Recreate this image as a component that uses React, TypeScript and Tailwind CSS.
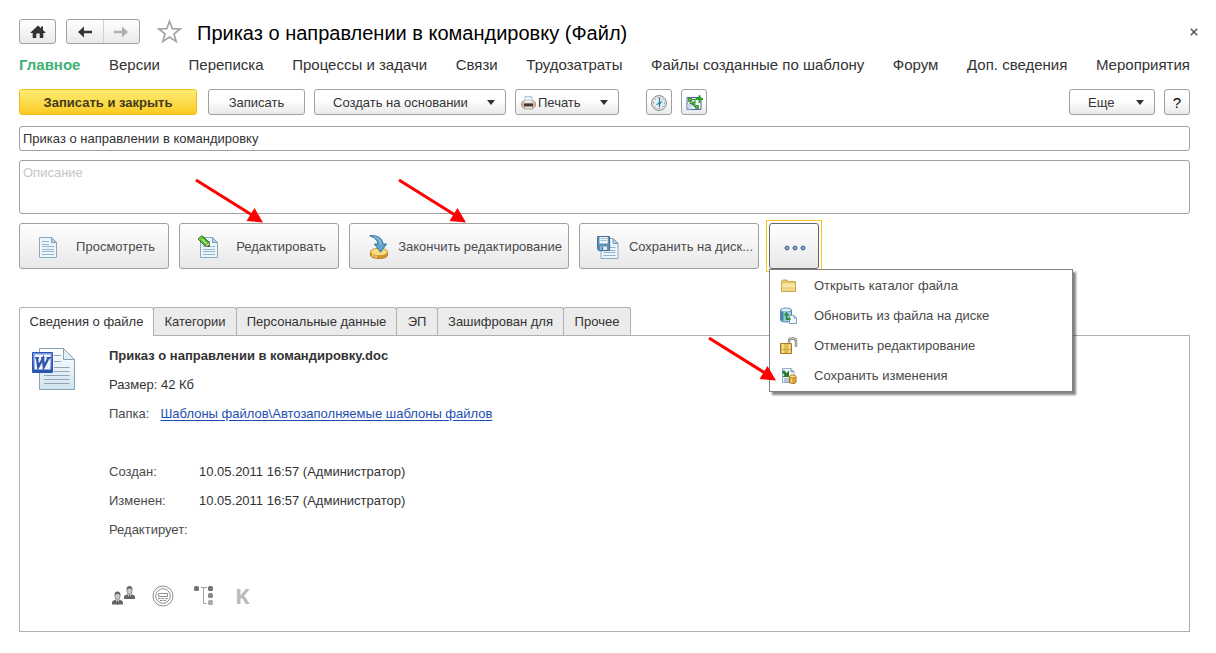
import type { ReactNode } from "react";

const toolButton =
  "flex h-[26px] shrink-0 items-center rounded-[3px] border border-[#a0a0a0] bg-linear-to-b from-white from-40% to-[#e9e9e9] pt-px text-[#333]";
const bigButton =
  "flex h-[46px] w-full items-center rounded-[3px] border border-[#a0a0a0] bg-linear-to-b from-white to-[#e8e8e8] pt-[2px] whitespace-nowrap text-[#4a4a4a]";

function Caret() {
  return (
    <svg width="8" height="5" viewBox="0 0 8 5" aria-hidden="true">
      <path d="M0 0h8L4 5z" fill="#333" />
    </svg>
  );
}

function HomeIcon() {
  return (
    <svg width="16" height="14" viewBox="0 0 16 14" fill="#333" aria-hidden="true">
      <path d="M8 .5.500 7.500V8h2.200v5h3.600V8.500h3.400V13h3.600V8h2.200v-.5L13 5V1.500h-2v1.700z" />
    </svg>
  );
}

function ArrowIcon({ color, flip }: { color: string; flip?: boolean }) {
  return (
    <svg width="14" height="12" viewBox="0 0 14 12" aria-hidden="true">
      <path
        d="M0 6 6 .5V4.800h8v2.400H6v4.300z"
        fill={color}
        transform={flip ? "matrix(-1 0 0 1 14 0)" : undefined}
      />
    </svg>
  );
}

function StarIcon() {
  return (
    <svg width="25" height="25" viewBox="0 0 25 25" aria-hidden="true">
      <path
        d="M12.500 2.200 15.300 9.700l7.900.3-6.200 4.900 2.200 7.700-6.700-4.500-6.700 4.500L8 14.900 1.800 10l7.900-.3z"
        fill="#fff"
        stroke="#a3a3a3"
        strokeWidth="1.700"
      />
    </svg>
  );
}

function PrinterIcon() {
  return (
    <svg width="15" height="14" viewBox="0 0 15 14" aria-hidden="true">
      <path d="M4 .5h7V6H4z" fill="#e8f0f6" stroke="#b3c3cf" />
      <path d="M2.500 4.500h10l2 2v4l-2 1h-10l-2-1v-4z" fill="#cdbfb4" stroke="#b0a197" />
      <path d="M3.500 4.500h8v2h-8z" fill="#f4f6f8" />
      <path d="M3 7.500h9v3H3z" fill="#3e3836" />
      <path d="M3.500 10.500h8l.5 2.500H3z" fill="#e9e2dc" stroke="#998a80" strokeWidth=".7" />
      <path d="M1 8h1.500v1.500H1zM12.500 8H14v1.500h-1.500z" fill="#e79c72" />
    </svg>
  );
}

function ClockIcon() {
  return (
    <svg width="16" height="16" viewBox="0 0 16 16" aria-hidden="true">
      <circle cx="8" cy="8" r="7.400" fill="#fff" stroke="#75828c" />
      <circle cx="8" cy="8" r="6" fill="#e6f1f8" stroke="#b4c2cc" strokeWidth=".7" />
      <path
        d="M8 2v1.200M8 12.800V14M2 8h1.200M12.800 8H14M3.800 3.800l.8.8M11.400 11.400l.8.8M3.800 12.200l.8-.8M12.200 3.800l-.8.8"
        stroke="#d9694a"
      />
      <path d="M8.500 3v9" stroke="#2d6d98" strokeWidth="1.200" />
      <path d="M5 9.500 8.500 8.500l2.500-2" fill="none" stroke="#3d9ac8" strokeWidth="1.300" />
      <circle cx="8.500" cy="8.300" r="1.300" fill="#2a86b5" />
    </svg>
  );
}

function SchemeIcon() {
  return (
    <svg width="17" height="16" viewBox="0 0 17 16" aria-hidden="true">
      <path d="M1 2.500h14v12H1z" fill="#f3f8fc" stroke="#4a669c" />
      <path d="M1.500 9h4v5.500h-4z" fill="#b9cbe0" />
      <path d="M1.500 10.500h4M1.500 12.500h4M3.500 9v5" stroke="#dde8f2" strokeWidth=".7" />
      <path d="M4 6v2.500h4v3h3M6 4.500h3v3" fill="none" stroke="#2f7f2a" />
      <path d="M2.500 3.500h3v3h-3zM6 7h3v3H6zM9.500 10.500h3v3h-3z" fill="#55b43e" stroke="#1f7420" strokeWidth=".7" />
      <path d="M9.500 3h3V.200h2V3H17v2h-2.500v3h-2V5h-3z" fill="#27a51a" />
    </svg>
  );
}

function PageShape() {
  return (
    <g>
      <path d="M.5.500h12l5 5v15H.5z" fill="#edf5fa" stroke="#8aa9be" />
      <path d="M12.500.500v5h5z" fill="#b9d3e4" stroke="#7c9fb8" />
      <path d="M3 4.500h7M3 7.500h7M3 9.500h12M3 12.500h12M3 14.500h12M3 17.500h12" stroke="#94b3c8" />
    </g>
  );
}

function PageIcon() {
  return (
    <svg width="20" height="22" viewBox="-1 -1 20 22" aria-hidden="true">
      <PageShape />
    </svg>
  );
}

function EditIcon() {
  return (
    <svg width="22" height="24" viewBox="0 0 22 24" aria-hidden="true">
      <g transform="translate(3 2)">
        <PageShape />
      </g>
      <path d="M1 4 5 .800 12 7l.5 4.500L8 10.800z" fill="#4fae2c" stroke="#237a19" />
      <path d="m4 3.500 6 5.500" stroke="#a5e57a" strokeWidth="1.800" />
      <path d="m12 7 .5 4.500L8 10.800z" fill="#e8d8a8" stroke="#4a6b2a" strokeWidth=".6" />
      <path d="m11.500 10 1 1.500-2-.3z" fill="#333" />
      <path d="M1 4 5 .800l1.300 1.100L2.300 5.200z" fill="#8ada60" stroke="#237a19" strokeWidth=".6" />
    </svg>
  );
}

function FinishIcon() {
  return (
    <svg width="20" height="24" viewBox="0 0 20 24" aria-hidden="true">
      <path d="M1.500 17v3c0 2 3.500 3.500 8.500 3.500s8.500-1.500 8.500-3.500v-3z" fill="#cf962f" stroke="#b67d1d" />
      <ellipse cx="10" cy="17" rx="8.500" ry="3.800" fill="#f8dc80" stroke="#c89430" />
      <path d="M4 19.500v2.500M7 20.500v2.500" stroke="#f5d77c" strokeWidth="1.500" />
      <path d="M.8.800C8.500 0 13.300 3 14 9h3.500l-6 8.200L5.500 9H9C8.500 5.500 6 2.500.8.800z" fill="#5fa5ce" stroke="#2f709a" />
      <path d="M5 1.800c4.500.8 6.500 3.500 6.700 8" fill="none" stroke="#a9d5ec" />
    </svg>
  );
}

function DiskIcon() {
  return (
    <svg width="22" height="23" viewBox="0 0 22 23" aria-hidden="true">
      <g transform="translate(3.500 2)">
        <PageShape />
      </g>
      <path d="M.6.600h12v14H2L.6 13.400z" fill="#5d90b6" stroke="#3d6c92" />
      <path d="M2.500 1h8.200v6.500H2.500z" fill="#f2f7fb" />
      <path d="M3.500 2.500h6M3.500 4.500h6" stroke="#9db9ce" />
      <path d="M3.500 10.500h6.500V14H3.500z" fill="#dbe7f0" />
      <path d="M4.500 11H6v3H4.500z" fill="#3d6c92" />
    </svg>
  );
}

function DotsIcon() {
  return (
    <svg width="22" height="6" viewBox="0 0 22 6" fill="#7f9fd0" stroke="#44638f" aria-hidden="true">
      <circle cx="3" cy="3" r="2" />
      <circle cx="11" cy="3" r="2" />
      <circle cx="19" cy="3" r="2" />
    </svg>
  );
}

function FolderIcon() {
  return (
    <svg width="18" height="18" viewBox="0 0 18 18" aria-hidden="true">
      <path d="M1.500 4.500 2.500 3h4.500l1.500 1.500h7v10h-14z" fill="#e8c76a" stroke="#cda54a" />
      <path d="M2 6.500h13v4H2z" fill="#f8e6a2" />
      <path d="M2 10.500h13V14H2z" fill="#f0d684" />
    </svg>
  );
}

function RefreshIcon() {
  return (
    <svg width="18" height="18" viewBox="0 0 18 18" aria-hidden="true">
      <path d="M.5 3v10c0 1.500 2.300 2 5.500 2s5.500-.5 5.500-2V3z" fill="#a5cbe0" stroke="#4f87a8" />
      <path d="M1 5h2.500v9L1 13z" fill="#4c87aa" />
      <ellipse cx="6" cy="3" rx="5.500" ry="2" fill="#e1f0f8" stroke="#5f97b8" />
      <path d="M9.500 8.500h4.500l2.500 2.500v5.500h-7z" fill="#f3f8fc" stroke="#7c9fb8" />
      <path d="M14 8.500V11h2.500" fill="none" stroke="#7c9fb8" />
      <path d="M3.500 8.500 6.500 5l3 3.500H7.500V11h3v2H5.700V8.500z" fill="#1f8f3a" />
    </svg>
  );
}

function LockIcon() {
  return (
    <svg width="18" height="18" viewBox="0 0 18 18" aria-hidden="true">
      <path d="M9 8V4.500C9 2.500 10.200 1.500 12.500 1.500S16 2.500 16 4.500V10" fill="none" stroke="#77746c" strokeWidth="2.400" />
      <path d="M9 8V4.500C9 2.500 10.200 1.500 12.500 1.500S16 2.500 16 4.500V10" fill="none" stroke="#e5e1d8" />
      <path d="M.5 6.500h11v10H.5z" fill="#e6bd52" stroke="#a87b22" />
      <path d="M3 7v9M9.500 7v9" stroke="#f8e5a0" strokeWidth="1.500" />
      <path d="M1 12.500h10" stroke="#d2a645" />
    </svg>
  );
}

function SaveChangesIcon() {
  return (
    <svg width="18" height="18" viewBox="0 0 18 18" aria-hidden="true">
      <path d="M2.500 1.500h8.500l3 3v11H2.500z" fill="#edf5fa" stroke="#93aec1" />
      <path d="M11 1.500v3h3" fill="#c6d9e6" stroke="#7795ab" />
      <path d="M2.500 3.500h2L6.500 6l2.500-2.500v6.500H2.500l2-2-2-2z" fill="#2c7a2c" />
      <path d="M4 12h5M4 14h5" stroke="#8299aa" />
      <path d="M9.500 9.500v5.500c0 2 6.500 2 6.500 0V9.500z" fill="#dfa93a" stroke="#a9761b" />
      <ellipse cx="12.750" cy="9.500" rx="3.250" ry="1.400" fill="#f9df88" stroke="#b98727" />
      <path d="M11.500 11.500v4.500" stroke="#f8dc82" />
    </svg>
  );
}

function WordIcon() {
  return (
    <svg width="44" height="44" viewBox="0 0 44 44" aria-hidden="true">
      <defs>
        <linearGradient id="sheet" x1="0" y1="0" x2="0" y2="1">
          <stop offset="0" stopColor="#fff" />
          <stop offset="1" stopColor="#cfe2ee" />
        </linearGradient>
        <linearGradient id="badge" x1="0" y1="0" x2="0" y2="1">
          <stop offset="0" stopColor="#789bec" />
          <stop offset="1" stopColor="#2450a8" />
        </linearGradient>
      </defs>
      <path d="M7.500 1.500h24l11 11v30h-35z" fill="url(#sheet)" stroke="#86a2b5" />
      <path d="M31.500 1.500v11h11z" fill="#e2eef5" stroke="#86a2b5" />
      <path
        d="M22 8.500h7M22 14.500h7M22 20.500h15.500M22 24.500h15.500M12 28.500h25.500M12 32.500h25.500M12 36.500h25.500"
        stroke="#91a6b4"
      />
      <path d="M.5 5.500h20v20H.5z" fill="url(#badge)" stroke="#2c55b5" />
      <path d="M2.500 7.500h16v15h-16z" fill="#f3f6fd" />
      <path d="m5 11 1.200 9L11 11.500l.8 8.500 5-9.500" fill="none" stroke="#3157ad" strokeWidth="2.400" />
      <path d="M3 10.800h4M9 10.800h3.500M14.500 10.800H19" stroke="#3157ad" strokeWidth="1.500" />
    </svg>
  );
}

function PeopleIcon() {
  const person = (
    <g>
      <path d="M0 13v-2c0-1.500 1.500-2.300 3.500-2.800h4C9.500 8.700 11 9.500 11 11v2z" fill="#666" />
      <path d="m3.800 8.200 1.700 4.300 1.700-4.300z" fill="#e6e6e6" />
      <path d="M5.500 9v4" stroke="#555" />
      <ellipse cx="5.500" cy="4.500" rx="2.600" ry="3.700" fill="#c9c9c9" stroke="#777" strokeWidth=".7" />
      <path d="M2.500 4C2.300 1.300 3.500 0 5.500 0s3.200 1.300 3 4c-1-2-4.500-2-6 0z" fill="#666" />
    </g>
  );
  return (
    <svg width="24" height="20" viewBox="0 0 24 20" aria-hidden="true">
      <g transform="translate(12 0)">{person}</g>
      <g transform="translate(0 5.500)">{person}</g>
    </svg>
  );
}

function StampIcon() {
  return (
    <svg width="22" height="22" viewBox="0 0 22 22" fill="none" stroke="#8c8c8c" aria-hidden="true">
      <circle cx="11" cy="11" r="10" />
      <circle cx="11" cy="11" r="7.300" />
      <path d="M6.500 8.500h9v3h-9zM6 13.500h2.500M9.500 13.500h2.500M13 13.500h2.500M8 15.500h2.500M11.500 15.500h2.500" />
    </svg>
  );
}

function TreeIcon() {
  return (
    <svg width="20" height="20" viewBox="0 0 20 20" aria-hidden="true">
      <path d="M7 1.500h6M9.500 1.500v16h3" fill="none" stroke="#a0a0a0" />
      <rect x="0" y="0" width="5" height="5" rx="1.500" fill="#777" />
      <rect x="14" y="0" width="5" height="5" rx="1.500" fill="#777" />
      <rect x="14" y="7" width="5" height="5" rx="1.500" fill="#8a8a8a" />
      <rect x="14" y="14" width="5" height="5" rx="1.500" fill="#aaa" />
    </svg>
  );
}

function Pointer({ className }: { className: string }) {
  return (
    <svg
      className={`pointer-events-none absolute z-20 ${className}`}
      width="70"
      height="46"
      viewBox="0 0 70 46"
      aria-hidden="true"
    >
      <path d="m2 2 56 35" stroke="#f00" strokeWidth="3" />
      <path d="M69 44.500 52.500 43 60.500 30z" fill="#f00" />
    </svg>
  );
}

const sections = [
  "Версии",
  "Переписка",
  "Процессы и задачи",
  "Связи",
  "Трудозатраты",
  "Файлы созданные по шаблону",
  "Форум",
  "Доп. сведения",
  "Мероприятия",
];

const menuItems: { label: string; icon: ReactNode }[] = [
  { label: "Открыть каталог файла", icon: <FolderIcon /> },
  { label: "Обновить из файла на диске", icon: <RefreshIcon /> },
  { label: "Отменить редактирование", icon: <LockIcon /> },
  { label: "Сохранить изменения", icon: <SaveChangesIcon /> },
];

const tabs = [
  { label: "Сведения о файле", width: "w-[135px]" },
  { label: "Категории", width: "w-[84px]" },
  { label: "Персональные данные", width: "w-[161px]" },
  { label: "ЭП", width: "w-[42px]" },
  { label: "Зашифрован для", width: "w-[127px]" },
  { label: "Прочее", width: "w-[68px]" },
];

function Header() {
  return (
    <header className="flex h-[25px] items-center">
      <button
        type="button"
        aria-label="Домой"
        className="flex h-[25px] w-[37px] items-center justify-center rounded-[3px] border border-[#a0a0a0] bg-linear-to-b from-white to-[#e9e9e9]"
      >
        <HomeIcon />
      </button>
      <div className="ml-[10px] flex h-[25px] w-[74px] rounded-[3px] border border-[#a0a0a0] bg-linear-to-b from-white to-[#e9e9e9]">
        <button
          type="button"
          aria-label="Назад"
          className="flex flex-1 items-center justify-center border-r border-[#d0d0d0]"
        >
          <ArrowIcon color="#333" />
        </button>
        <button type="button" aria-label="Вперед" className="flex flex-1 items-center justify-center">
          <ArrowIcon color="#b0b0b0" flip />
        </button>
      </div>
      <button type="button" aria-label="В избранное" className="ml-[17px]">
        <StarIcon />
      </button>
      <h1 className="ml-[15px] flex-1 pt-[2px] text-[20px] leading-6 whitespace-nowrap text-black">
        Приказ о направлении в командировку (Файл)
      </h1>
      <button type="button" aria-label="Закрыть" className="-mr-2 flex size-2">
        <svg width="8" height="8" viewBox="0 0 8 8" aria-hidden="true">
          <path d="m.8.800 6.400 6.400M7.200.800.800 7.200" stroke="#555" strokeWidth="1.500" />
        </svg>
      </button>
    </header>
  );
}

function Toolbar() {
  return (
    <div className="mt-[13px] flex h-[26px]">
      <button
        type="button"
        className="flex h-[26px] w-[178px] items-center justify-center rounded-[3px] border border-[#efbb20] bg-linear-to-b from-[#fdec70] to-[#fbcb16] pt-px font-bold text-[#433a1c]"
      >
        Записать и закрыть
      </button>
      <button type="button" className={`${toolButton} ml-[11px] w-[97px] justify-center`}>
        Записать
      </button>
      <button type="button" className={`${toolButton} ml-[9px] w-[192px] justify-between pr-[10px] pl-[18px]`}>
        Создать на основании
        <Caret />
      </button>
      <button type="button" className={`${toolButton} ml-[9px] w-[104px] gap-[2px] pr-[10px] pl-[5px]`}>
        <PrinterIcon />
        <span className="flex-1 text-left">Печать</span>
        <Caret />
      </button>
      <button type="button" aria-label="Время" className={`${toolButton} ml-[27px] w-[26px] justify-center`}>
        <ClockIcon />
      </button>
      <button type="button" aria-label="Схема" className={`${toolButton} ml-[9px] w-[26px] justify-center`}>
        <SchemeIcon />
      </button>
      <button type="button" className={`${toolButton} ml-auto w-[86px] justify-between pr-[10px] pl-[18px]`}>
        Еще
        <Caret />
      </button>
      <button type="button" className={`${toolButton} ml-[9px] w-[26px] justify-center text-[15px] text-black`}>
        ?
      </button>
    </div>
  );
}

function FileActions() {
  return (
    <div className="mt-[9px] flex gap-[10px]">
      <div className="w-[150px]">
        <button type="button" className={`${bigButton} justify-between pr-[13px] pl-[18px]`}>
          <PageIcon />
          Просмотреть
        </button>
      </div>
      <div className="relative w-[160px]">
        <button type="button" className={`${bigButton} justify-between pr-3 pl-[17px]`}>
          <EditIcon />
          Редактировать
        </button>
        <Pointer className="-top-[45px] left-[15px]" />
      </div>
      <div className="relative w-[220px]">
        <button type="button" className={`${bigButton} justify-between pr-[6px] pl-[19px]`}>
          <FinishIcon />
          Закончить редактирование
        </button>
        <Pointer className="-top-[45px] left-12" />
      </div>
      <div className="w-[180px]">
        <button type="button" className={`${bigButton} justify-between pr-[5px] pl-[17px]`}>
          <DiskIcon />
          Сохранить на диск...
        </button>
      </div>
      <div className="relative w-[50px]">
        <div className="pointer-events-none absolute -inset-[3px] border border-[#f8c820]" />
        <button
          type="button"
          aria-label="Еще действия"
          aria-haspopup="menu"
          aria-expanded="true"
          className="flex h-[46px] w-full items-center justify-center rounded-[3px] border border-[#666] bg-linear-to-b from-white to-[#e8e8e8] pt-[3px] pl-[2px]"
        >
          <DotsIcon />
        </button>
        <div
          role="menu"
          className="absolute top-[46px] left-0 z-10 w-[304px] border border-[#808080] bg-white pt-px shadow-[3px_3px_2px_0_#0000007a]"
        >
          {menuItems.map((item) => (
            <button
              key={item.label}
              type="button"
              role="menuitem"
              className="flex h-[30px] w-full items-center gap-[16px] pl-[10px] text-[#4a4a4a]"
            >
              {item.icon}
              {item.label}
            </button>
          ))}
          <Pointer className="top-[66px] -left-[63px]" />
        </div>
      </div>
    </div>
  );
}

function FileDetails() {
  return (
    <section className="flex border border-[#b0b0b0] pt-[5px] pb-[23px] pl-3">
      <div className="w-[77px] shrink-0 pt-[6px]">
        <WordIcon />
      </div>
      <div className="leading-[29px] text-[#4a4a4a]">
        <h2 className="font-bold text-[#333]">Приказ о направлении в командировку.doc</h2>
        <p className="text-[#333]">Размер: 42 Кб</p>
        <p>
          Папка:
          <a href="#folder" className="ml-[11px] text-[#1d4fb0] underline underline-offset-2">
            Шаблоны файлов\Автозаполняемые шаблоны файлов
          </a>
        </p>
        <dl className="mt-[29px] grid grid-cols-[90px_auto]">
          <dt>Создан:</dt>
          <dd className="text-[#333]">10.05.2011 16:57 (Администратор)</dd>
          <dt>Изменен:</dt>
          <dd className="text-[#333]">10.05.2011 16:57 (Администратор)</dd>
          <dt>Редактирует:</dt>
          <dd />
        </dl>
        <div className="mt-10 flex h-6 items-center pl-[3px]">
          <PeopleIcon />
          <span className="ml-4">
            <StampIcon />
          </span>
          <span className="ml-[20px]">
            <TreeIcon />
          </span>
          <span className="ml-[21px] pb-[3px] font-['Open_Sans',sans-serif] text-[22px] leading-6 font-bold text-[#bbb]">
            K
          </span>
        </div>
      </div>
    </section>
  );
}

export default function App() {
  return (
    <main className="min-h-screen bg-white pt-[19px] pr-[26px] pb-5 pl-[19px] font-['Liberation_Sans',Arial,sans-serif] text-[13px] leading-4 text-[#333]">
      <Header />
      <nav className="mt-[10px] flex justify-between text-[15px] leading-[22px] whitespace-nowrap">
        <a href="#main" className="font-bold text-[#3fb076]">
          Главное
        </a>
        {sections.map((label) => (
          <a key={label} href="#section">
            {label}
          </a>
        ))}
      </nav>
      <Toolbar />
      <input
        aria-label="Наименование"
        defaultValue="Приказ о направлении в командировку"
        className="mt-[11px] block h-[25px] w-full rounded-[3px] border border-[#a0a0a0] px-[3px]"
      />
      <textarea
        aria-label="Описание"
        placeholder="Описание"
        className="mt-[9px] block h-[54px] w-full resize-none rounded-[3px] border border-[#a0a0a0] px-[3px] py-1 placeholder:text-[#c6c6c6]"
      />
      <FileActions />
      <div role="tablist" className="mt-[38px] flex">
        {tabs.map((tab, index) => (
          <button
            key={tab.label}
            type="button"
            role="tab"
            aria-selected={index === 0}
            className={`${tab.width} rounded-t-[3px] border border-b-0 border-[#b0b0b0] whitespace-nowrap ${
              index === 0 ? "relative z-1 -mb-px h-[29px] bg-white" : "-ml-px h-7 bg-[#ebebeb]"
            }`}
          >
            {tab.label}
          </button>
        ))}
      </div>
      <FileDetails />
    </main>
  );
}
